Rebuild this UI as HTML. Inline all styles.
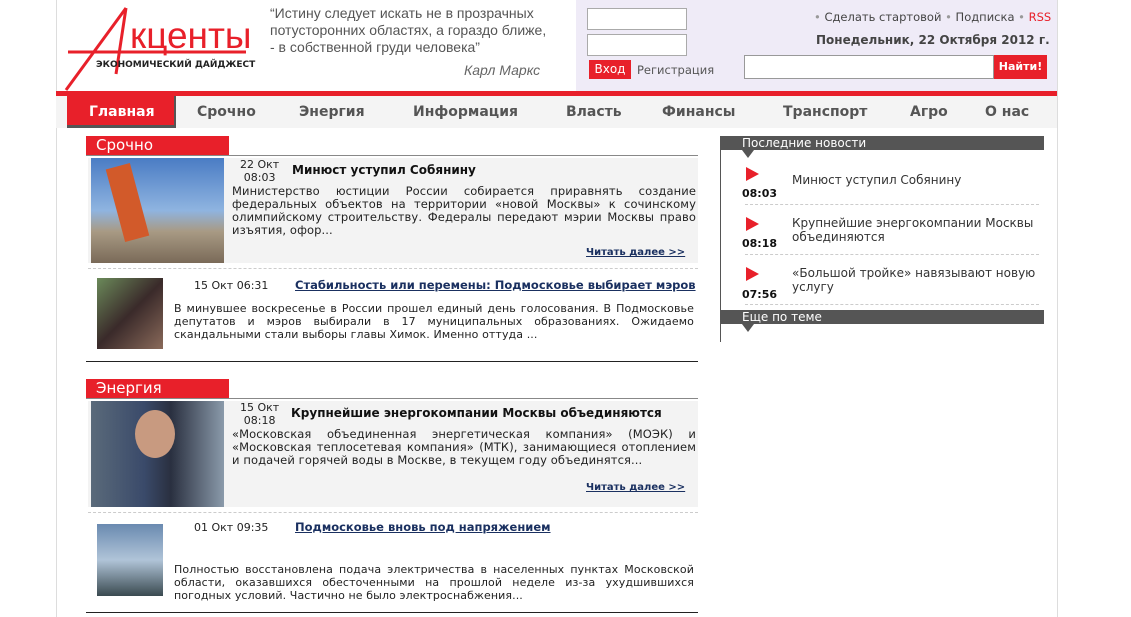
<!DOCTYPE html>
<html><head><meta charset="utf-8"><style>
*{margin:0;padding:0;box-sizing:border-box}
body{width:1131px;height:617px;overflow:hidden;background:#fff;position:relative;font-family:"DejaVu Sans",Verdana,sans-serif;color:#222}
.a{position:absolute}
.v{font-family:"DejaVu Sans",Verdana,sans-serif;font-size:11px;line-height:13px}
.j{text-align:justify;text-align-last:left;font-size:11.5px;letter-spacing:0.1px;line-height:13px}
.nav span{position:absolute;top:104px;font:bold 14px "DejaVu Sans",sans-serif;color:#555}
.sec{background:#e8202a;color:#fff;font:15px "DejaVu Sans",sans-serif;padding-left:10px;line-height:19px}
.t{font:bold 12px "DejaVu Sans",sans-serif;color:#111}
.lk{font:bold 11.5px "DejaVu Sans",sans-serif;color:#1a3060;text-decoration:underline}
.rd{font:bold 10px "DejaVu Sans",sans-serif;color:#1a3060;text-decoration:underline}
.dash{border-top:1px dashed #ccc;height:0}
.tri{width:0;height:0;border-top:7px solid transparent;border-bottom:7px solid transparent;border-left:13px solid #e8202a}
.tm{font:bold 11px "DejaVu Sans",sans-serif;color:#111}
.rt{font:12px "DejaVu Sans",sans-serif;color:#333;line-height:14px}
</style></head><body>
<div class="a" style="left:56px;top:0;width:1px;height:617px;background:#ddd"></div>
<div class="a" style="left:1057px;top:0;width:1px;height:617px;background:#ddd"></div>
<div class="a" style="left:576px;top:0;width:481px;height:91px;background:#efebf7"></div>
<svg class="a" style="left:60px;top:4px" width="200" height="88">
<line x1="6" y1="86" x2="66" y2="4" stroke="#e8202a" stroke-width="3"/>
<line x1="66" y1="4" x2="56" y2="70" stroke="#e8202a" stroke-width="3"/>
<line x1="8" y1="48" x2="186" y2="48" stroke="#e8202a" stroke-width="3"/>
<text x="70" y="44" font-family="Liberation Sans,sans-serif" font-size="37" fill="#e8202a">кценты</text>
<text x="36" y="63" font-family="DejaVu Sans,sans-serif" font-weight="bold" font-size="9" fill="#222">ЭКОНОМИЧЕСКИЙ ДАЙДЖЕСТ</text>
</svg>
<div class="a" style="left:270px;top:5px;font:14px/17px 'Liberation Sans',sans-serif;color:#555">“Истину следует искать не в прозрачных<br>потусторонних областях, а гораздо ближе,<br>- в собственной груди человека”</div>
<div class="a" style="left:464px;top:62px;font:italic 14px 'Liberation Sans',sans-serif;color:#666">Карл Маркс</div>
<div class="a" style="left:587px;top:8px;width:100px;height:22px;background:#fff;border:1px solid #aaa"></div>
<div class="a" style="left:587px;top:34px;width:100px;height:22px;background:#fff;border:1px solid #aaa"></div>
<div class="a" style="left:589px;top:60px;width:42px;height:19px;background:#e8202a;color:#fff;font:12px/19px 'DejaVu Sans',sans-serif;text-align:center">Вход</div>
<div class="a" style="left:637px;top:63px;font:11.5px 'DejaVu Sans',sans-serif;color:#555">Регистрация</div>
<div class="a" style="left:814px;top:10px;font:11.5px 'DejaVu Sans',sans-serif;color:#444"><span style="color:#999">•</span> Сделать стартовой <span style="color:#999">•</span> Подписка <span style="color:#999">•</span> <span style="color:#e8202a">RSS</span></div>
<div class="a" style="left:816px;top:33px;font:bold 12px 'DejaVu Sans',sans-serif;color:#444">Понедельник, 22 Октября 2012 г.</div>
<div class="a" style="left:744px;top:55px;width:250px;height:24px;background:#fff;border:1px solid #999"></div>
<div class="a" style="left:994px;top:55px;width:53px;height:24px;background:#e8202a;color:#fff;font:bold 11px/24px 'DejaVu Sans',sans-serif;text-align:center">Найти!</div>
<div class="a" style="left:56px;top:91px;width:1001px;height:5px;background:#e8202a"></div>
<div class="a" style="left:56px;top:96px;width:1001px;height:32px;background:#f4f4f4"></div>
<div class="a" style="left:67px;top:96px;width:109px;height:32px;background:#e8202a;border-right:2px solid #555;border-bottom:3px solid #555"></div>
<div class="nav">
<span style="left:89px;color:#fff">Главная</span>
<span style="left:197px">Срочно</span>
<span style="left:299px">Энергия</span>
<span style="left:413px">Информация</span>
<span style="left:566px">Власть</span>
<span style="left:662px">Финансы</span>
<span style="left:783px">Транспорт</span>
<span style="left:910px">Агро</span>
<span style="left:985px">О нас</span>
</div>
<div class="a sec" style="left:86px;top:136px;width:143px">Срочно</div>
<div class="a" style="left:86px;top:155px;width:612px;height:1px;background:#888"></div>
<div class="a" style="left:88px;top:158px;width:610px;height:105px;background:#f3f3f3"></div>
<div class="a" style="left:91px;top:158px;width:133px;height:105px;background:linear-gradient(180deg,#4a7cc4 0%,#8fb4e0 50%,#a89a84 70%,#7a6a58 100%)"></div>
<div class="a" style="left:115px;top:165px;width:25px;height:75px;background:#d25a2a;transform:rotate(-15deg)"></div>
<div class="a v" style="left:240px;top:158px;text-align:center">22 Окт<br>08:03</div>
<div class="a t" style="left:292px;top:163px">Минюст уступил Собянину</div>
<div class="a j" style="left:232px;top:185px;width:464px">Министерство юстиции России собирается приравнять создание федеральных объектов на территории «новой Москвы» к сочинскому олимпийскому строительству. Федералы передают мэрии Москвы право изъятия, офор...</div>
<div class="a rd" style="left:586px;top:247px">Читать далее &gt;&gt;</div>
<div class="a dash" style="left:88px;top:268px;width:610px"></div>
<div class="a" style="left:97px;top:278px;width:66px;height:71px;background:linear-gradient(135deg,#6b8a5a,#3a2a2a 50%,#8a6a5a)"></div>
<div class="a v" style="left:194px;top:279px">15 Окт 06:31</div>
<div class="a lk" style="left:295px;top:278px">Стабильность или перемены: Подмосковье выбирает мэров</div>
<div class="a j" style="left:174px;top:302px;width:520px;font-size:11px;letter-spacing:0.1px">В минувшее воскресенье в России прошел единый день голосования. В Подмосковье депутатов и мэров выбирали в 17 муниципальных образованиях. Ожидаемо скандальными стали выборы главы Химок. Именно оттуда ...</div>
<div class="a" style="left:86px;top:361px;width:612px;height:1px;background:#222"></div>
<div class="a sec" style="left:86px;top:379px;width:143px">Энергия</div>
<div class="a" style="left:86px;top:398px;width:612px;height:1px;background:#888"></div>
<div class="a" style="left:88px;top:401px;width:610px;height:106px;background:#f3f3f3"></div>
<div class="a" style="left:91px;top:401px;width:133px;height:106px;background:linear-gradient(90deg,#5a6a7a,#3a4a6a 40%,#2a3040 60%,#8a9aaa)"></div>
<div class="a" style="left:135px;top:410px;width:40px;height:48px;border-radius:50%;background:#c89a80"></div>
<div class="a v" style="left:240px;top:401px;text-align:center">15 Окт<br>08:18</div>
<div class="a t" style="left:291px;top:406px">Крупнейшие энергокомпании Москвы объединяются</div>
<div class="a j" style="left:232px;top:428px;width:464px">«Московская объединенная энергетическая компания» (МОЭК) и «Московская теплосетевая компания» (МТК), занимающиеся отоплением и подачей горячей воды в Москве, в текущем году объединятся...</div>
<div class="a rd" style="left:586px;top:482px">Читать далее &gt;&gt;</div>
<div class="a dash" style="left:88px;top:512px;width:610px"></div>
<div class="a" style="left:97px;top:524px;width:66px;height:72px;background:linear-gradient(180deg,#6a8ab0,#b0c4d8 50%,#3a4a50)"></div>
<div class="a v" style="left:194px;top:521px">01 Окт 09:35</div>
<div class="a lk" style="left:295px;top:520px">Подмосковье вновь под напряжением</div>
<div class="a j" style="left:174px;top:563px;width:520px;font-size:11px;letter-spacing:0.1px">Полностью восстановлена подача электричества в населенных пунктах Московской области, оказавшихся обесточенными на прошлой неделе из-за ухудшившихся погодных условий. Частично не было электроснабжения...</div>
<div class="a" style="left:86px;top:612px;width:612px;height:1px;background:#222"></div>
<div class="a" style="left:720px;top:136px;width:1px;height:206px;background:#555"></div>
<div class="a" style="left:720px;top:136px;width:324px;height:14px;background:#555;color:#fff;font:12px/14px 'DejaVu Sans',sans-serif;padding-left:22px">Последние новости</div>
<div class="a" style="left:742px;top:150px;border-left:6px solid transparent;border-right:6px solid transparent;border-top:8px solid #555"></div>
<div class="a tri" style="left:746px;top:167px"></div>
<div class="a tm" style="left:742px;top:187px">08:03</div>
<div class="a rt" style="left:792px;top:173px">Минюст уступил Собянину</div>
<div class="a dash" style="left:745px;top:204px;width:294px"></div>
<div class="a tri" style="left:746px;top:217px"></div>
<div class="a tm" style="left:742px;top:237px">08:18</div>
<div class="a rt" style="left:792px;top:216px">Крупнейшие энергокомпании Москвы<br>объединяются</div>
<div class="a dash" style="left:745px;top:254px;width:294px"></div>
<div class="a tri" style="left:746px;top:267px"></div>
<div class="a tm" style="left:742px;top:288px">07:56</div>
<div class="a rt" style="left:792px;top:266px">«Большой тройке» навязывают новую<br>услугу</div>
<div class="a dash" style="left:745px;top:304px;width:294px"></div>
<div class="a" style="left:720px;top:310px;width:324px;height:14px;background:#555;color:#fff;font:12px/14px 'DejaVu Sans',sans-serif;padding-left:22px">Еще по теме</div>
<div class="a" style="left:742px;top:324px;border-left:6px solid transparent;border-right:6px solid transparent;border-top:8px solid #555"></div>
</body></html>
